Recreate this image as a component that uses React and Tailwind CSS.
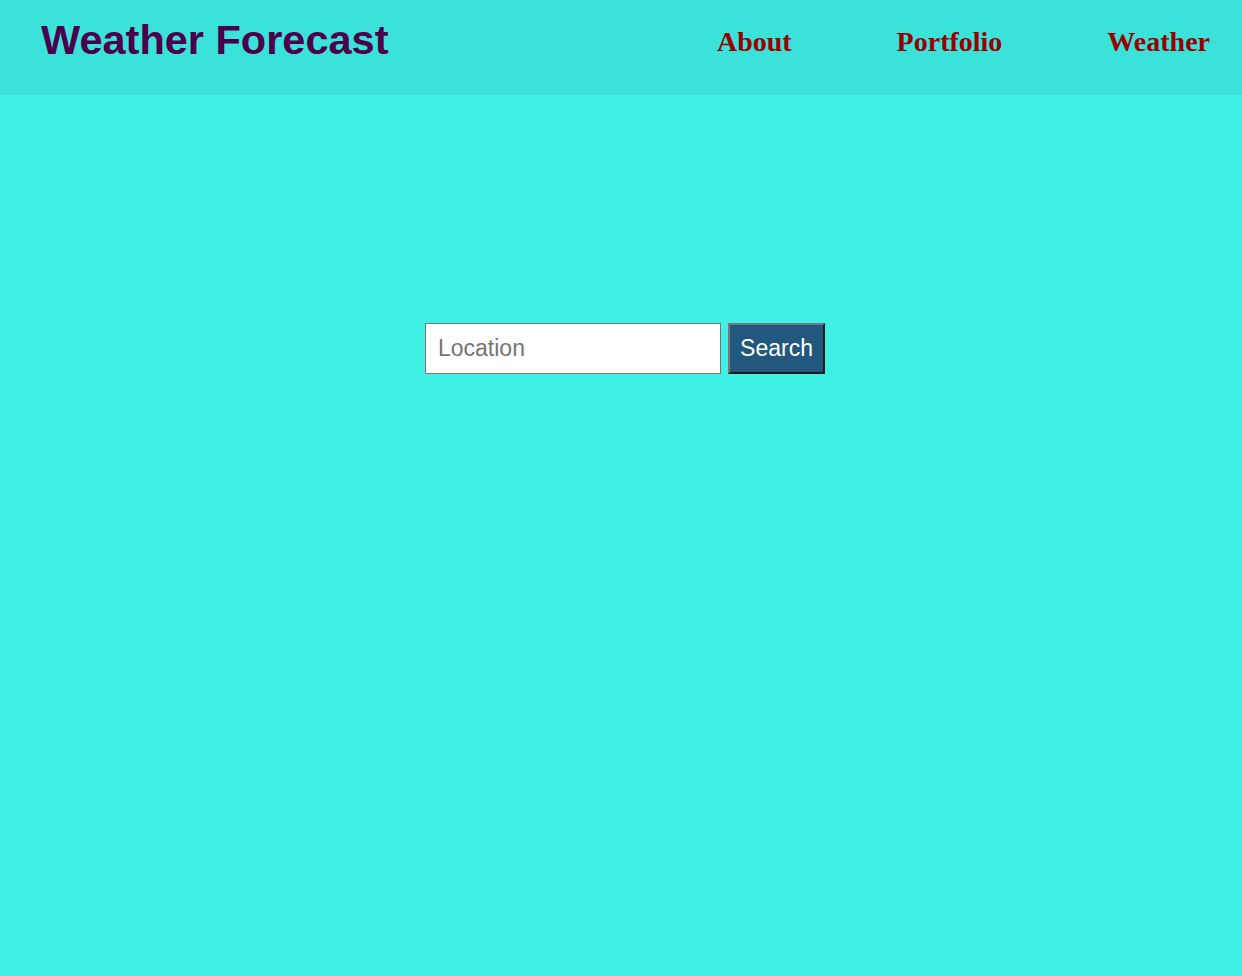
import { useState } from "react";

const App = () => {
    const [location, setLocation] = useState("");

    return (
        <div className="min-h-[976px] bg-[#3ff0e5]">
            {/* Header */}
            <header className="flex h-[95px] items-center justify-between bg-[#3be2da] pl-[41px] pr-[32px]">
                <h1 className="mt-[-14px] font-['Liberation_Sans',Arial,sans-serif] text-[41.5px] font-bold text-[#4d004a]">
                    Weather Forecast
                </h1>
                <nav className="mt-[-12px] flex gap-[105px] font-['Liberation_Serif','Times_New_Roman',serif] text-[28px] font-bold text-[#990000]">
                    <a href="#">About</a>
                    <a href="#">Portfolio</a>
                    <a href="#">Weather</a>
                </nav>
            </header>

            {/* Search */}
            <div className="flex justify-center gap-[7px] pl-[8px] pt-[228px]">
                <input
                    type="text"
                    placeholder="Location"
                    value={location}
                    onChange={(e) => setLocation(e.target.value)}
                    className="h-[51px] w-[296px] border border-[#767676] bg-white px-[12px] font-['Liberation_Sans',Arial,sans-serif] text-[23px] text-black outline-none placeholder:text-[#757575]"
                />
                <button className="h-[51px] w-[97px] border-2 border-t-[#767676] border-l-[#767676] border-r-[#1b1b1b] border-b-[#1b1b1b] bg-[#22587e] font-['Liberation_Sans',Arial,sans-serif] text-[23px] text-white">
                    Search
                </button>
            </div>
        </div>
    );
};

export default App;
